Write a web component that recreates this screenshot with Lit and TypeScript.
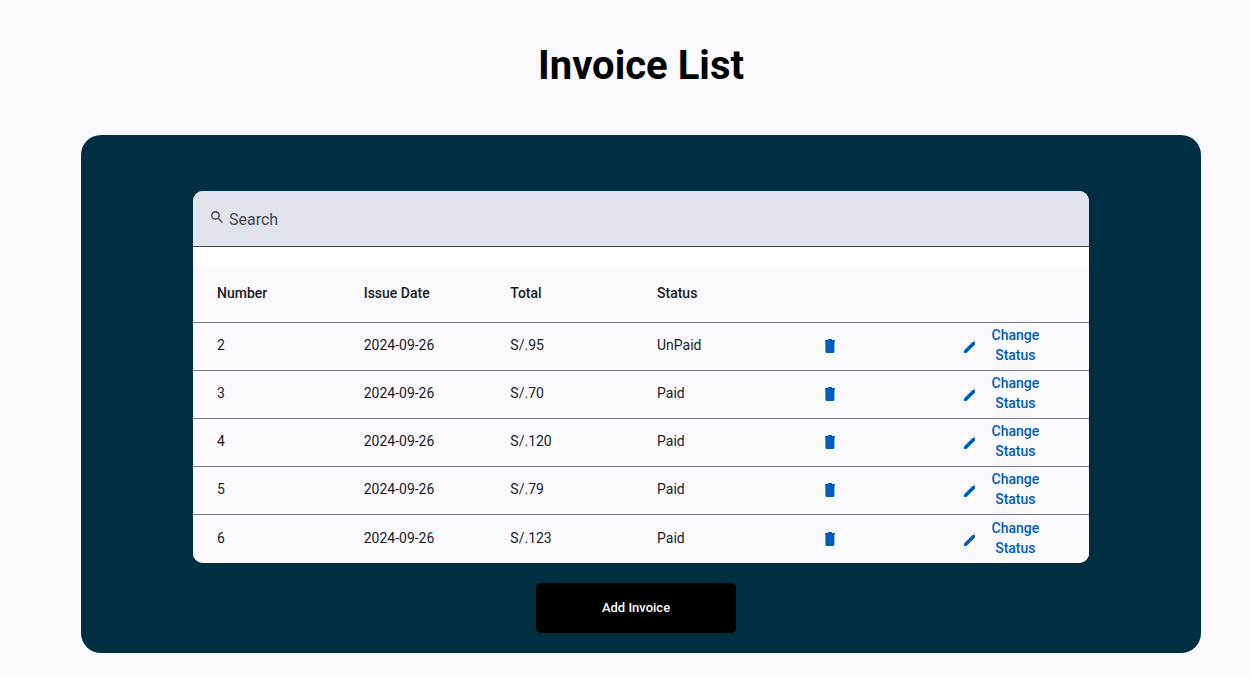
import { LitElement, html, css } from "lit";
import { customElement, property, state } from "lit/decorators.js";

interface Invoice {
  number: number;
  issueDate: string;
  total: number;
  paid: boolean;
}

@customElement("invoice-table")
export class InvoiceTable extends LitElement {
  @property({ attribute: false }) invoices: Invoice[] = [];

  static styles = css`
    :host {
      display: block;
    }
    table {
      width: 100%;
      table-layout: fixed;
      border-collapse: separate;
      border-spacing: 0;
      background: #faf9fd;
      color: #1a1b1f;
      font-size: 14px;
      line-height: 20px;
    }
    .data {
      width: 16.37%;
    }
    th,
    td {
      box-sizing: border-box;
      height: 48px;
      padding: 0 0 4px 24px;
      text-align: left;
      font-weight: 400;
      border-bottom: 1px solid #74777f;
    }
    th {
      height: 56px;
      font-weight: 500;
    }
    .action {
      padding: 0 16px 4px;
    }
    tr:last-child td {
      padding-bottom: 2px;
      border-bottom: 0;
    }
    button {
      display: flex;
      align-items: center;
      padding: 0;
      border: 0;
      background: none;
      color: #005cbb;
      font: 500 14px/20px Roboto, sans-serif;
      cursor: pointer;
    }
    .delete {
      justify-content: center;
      width: 68px;
      height: 40px;
    }
    .change {
      width: 104px;
      padding-left: 20px;
      gap: 8px;
    }
    .label {
      flex: 1;
      text-align: center;
    }
    svg {
      display: block;
      flex: none;
      margin-top: 2px;
      fill: currentColor;
    }
  `;

  private remove(invoice: Invoice) {
    this.dispatchEvent(new CustomEvent("remove-invoice", { detail: invoice.number }));
  }

  private toggle(invoice: Invoice) {
    this.dispatchEvent(new CustomEvent("toggle-invoice", { detail: invoice.number }));
  }

  render() {
    return html`
      <table>
        <colgroup>
          <col class="data" /><col class="data" /><col class="data" />
          <col class="data" /><col class="data" /><col />
        </colgroup>
        <thead>
          <tr>
            <th scope="col">Number</th>
            <th scope="col">Issue Date</th>
            <th scope="col">Total</th>
            <th scope="col">Status</th>
            <th></th>
            <th></th>
          </tr>
        </thead>
        <tbody>
          ${this.invoices.map(
            (invoice) => html`
              <tr>
                <td>${invoice.number}</td>
                <td>${invoice.issueDate}</td>
                <td>S/.${invoice.total}</td>
                <td>${invoice.paid ? "Paid" : "UnPaid"}</td>
                <td class="action">
                  <button class="delete" aria-label="Delete invoice" @click=${() => this.remove(invoice)}>
                    <svg width="18" height="18" viewBox="0 0 18 18" aria-hidden="true">
                      <path d="M4 3h3V2h4v1h3v1.500h-.6V15l-1 1H5.400l-1-1V4.500H4z" />
                    </svg>
                  </button>
                </td>
                <td class="action">
                  <button class="change" @click=${() => this.toggle(invoice)}>
                    <svg width="14" height="18" viewBox="0 0 14 18" aria-hidden="true">
                      <path d="M2 13.500V16h2.500L13 7.500V5h-2.500zM12.200 3.700l.8-.8v1.600z" />
                    </svg>
                    <span class="label">Change Status</span>
                  </button>
                </td>
              </tr>
            `
          )}
        </tbody>
      </table>
    `;
  }
}

@customElement("app-root")
export class AppRoot extends LitElement {
  @state() private query = "";
  @state() private invoices: Invoice[] = [
    { number: 2, issueDate: "2024-09-26", total: 95, paid: false },
    { number: 3, issueDate: "2024-09-26", total: 70, paid: true },
    { number: 4, issueDate: "2024-09-26", total: 120, paid: true },
    { number: 5, issueDate: "2024-09-26", total: 79, paid: true },
    { number: 6, issueDate: "2024-09-26", total: 123, paid: true },
  ];

  static styles = css`
    :host {
      display: block;
      box-sizing: border-box;
      min-height: 100vh;
      padding: 42px 49px 24px 81px;
      background: #faf9fd;
      font-family: Roboto, sans-serif;
    }
    h1 {
      margin: 0 0 45px;
      font-size: 40px;
      line-height: 48px;
      font-weight: 700;
      text-align: center;
      color: #000;
    }
    .panel {
      padding: 56px 10% 20px;
      border-radius: 20px;
      background: #002f42;
    }
    .card {
      overflow: hidden;
      border-radius: 10px;
      background: #fff;
    }
    .search {
      display: flex;
      align-items: center;
      gap: 4px;
      box-sizing: border-box;
      height: 56px;
      margin-bottom: 20px;
      padding: 2px 16px 0;
      background: #e0e2ec;
      border-bottom: 1px solid #44474e;
      color: #44474e;
    }
    .search svg {
      flex: none;
      margin-bottom: 6px;
      fill: currentColor;
    }
    input {
      flex: 1;
      min-width: 0;
      padding: 0;
      border: 0;
      outline: 0;
      background: none;
      color: #1a1b1f;
      font: 400 16px/24px Roboto, sans-serif;
    }
    input::placeholder {
      color: #44474e;
      opacity: 1;
    }
    .footer {
      display: flex;
      justify-content: center;
      padding: 20px 10px 0 0;
    }
    .add {
      width: 200px;
      height: 50px;
      padding: 0;
      border: 0;
      border-radius: 5px;
      background: #000;
      color: #fff;
      font: 500 13px/20px Roboto, sans-serif;
      cursor: pointer;
    }
  `;

  private get visible() {
    const q = this.query.trim().toLowerCase();
    return this.invoices.filter((i) =>
      `${i.number} ${i.issueDate} ${i.total} ${i.paid ? "paid" : "unpaid"}`.includes(q)
    );
  }

  private remove(e: CustomEvent<number>) {
    this.invoices = this.invoices.filter((i) => i.number !== e.detail);
  }

  private toggle(e: CustomEvent<number>) {
    this.invoices = this.invoices.map((i) => (i.number === e.detail ? { ...i, paid: !i.paid } : i));
  }

  render() {
    return html`
      <main>
        <h1>Invoice List</h1>
        <section class="panel">
          <div class="card">
            <label class="search">
              <svg width="16" height="18" viewBox="0 0 16 18" aria-hidden="true">
                <path
                  transform="translate(0 1) scale(.68)"
                  d="M15.500 14h-.79l-.28-.27A6.471 6.471 0 0 0 16 9.500 6.500 6.500 0 1 0 9.500 16c1.610 0 3.090-.59 4.230-1.570l.27.28v.79l5 4.990L20.490 19l-4.990-5zm-6 0C7.010 14 5 11.990 5 9.500S7.010 5 9.500 5 14 7.010 14 9.500 11.990 14 9.500 14z"
                />
              </svg>
              <input
                type="text"
                placeholder="Search"
                aria-label="Search"
                @input=${(e: Event) => (this.query = (e.target as HTMLInputElement).value)}
              />
            </label>
            <invoice-table
              .invoices=${this.visible}
              @remove-invoice=${this.remove}
              @toggle-invoice=${this.toggle}
            ></invoice-table>
          </div>
          <div class="footer">
            <button class="add" type="button">Add Invoice</button>
          </div>
        </section>
      </main>
    `;
  }
}
